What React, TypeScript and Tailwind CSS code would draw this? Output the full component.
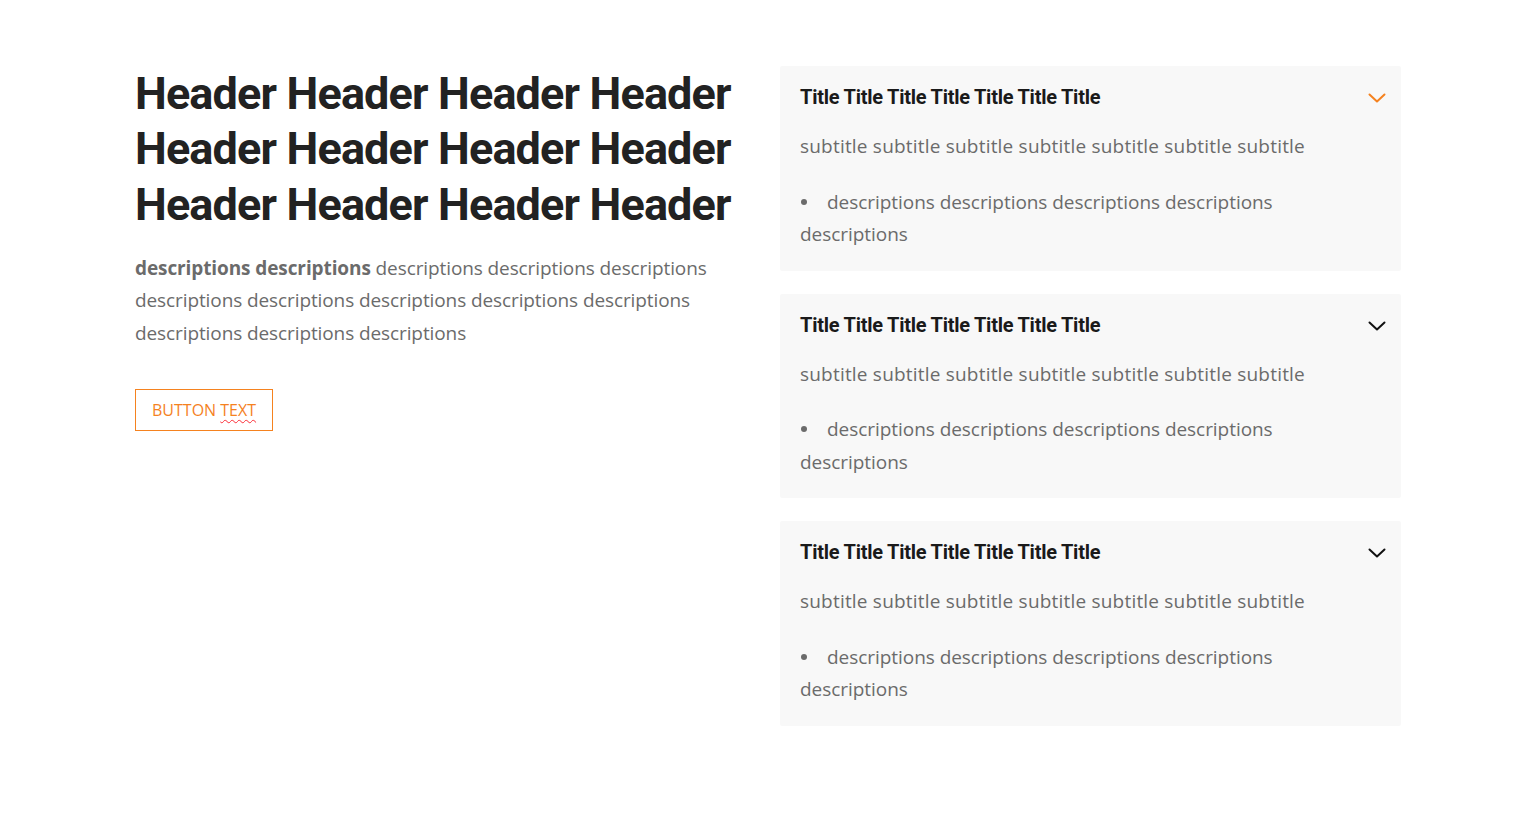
import React from 'react';

const items = [
  { title: 'Title Title Title Title Title Title Title', open: true },
  { title: 'Title Title Title Title Title Title Title', open: false },
  { title: 'Title Title Title Title Title Title Title', open: false },
];

const Chevron = ({ active }: { active: boolean }) => (
  <svg
    width="18"
    height="10"
    viewBox="0 0 18 10"
    fill="none"
    stroke="currentColor"
    strokeWidth={2}
    strokeLinecap="round"
    strokeLinejoin="round"
    className={active ? 'text-[#f5821f]' : 'text-[#111111]'}
  >
    <path d="M1.5 1.5 9 8.5l7.5-7" />
  </svg>
);

const App: React.FC = () => {
  return (
    <div className="min-h-[838px] w-full bg-white">
      <div className="ml-[135px] flex w-[1266px] gap-[45px] pt-[66px]">
        {/* left column */}
        <div className="w-[600px] shrink-0">
          <h1 className="font-['Roboto',sans-serif] text-[45px] font-bold leading-[55.3px] tracking-[-0.85px] text-[#222222]">
            Header Header Header Header Header Header Header Header Header Header Header Header
          </h1>
          <p className="mt-[20px] font-['Open_Sans',sans-serif] text-[19px] leading-[32.5px] tracking-[-0.1px] text-[#6b6b6b]">
            <span className="font-bold">descriptions descriptions</span> descriptions descriptions descriptions
            descriptions descriptions descriptions descriptions descriptions descriptions descriptions descriptions
          </p>
          <button className="mt-[40px] h-[42px] border border-[#f5821f] px-[16px] font-['Open_Sans',sans-serif] text-[16px] text-[#f5821f]">
            BUTTON{' '}
            <span className="underline decoration-red-500 decoration-wavy decoration-1 underline-offset-[3px]">TEXT</span>
          </button>
        </div>

        {/* right column: accordion */}
        <div className="flex flex-1 flex-col gap-[23px]">
          {items.map((item, i) => (
            <div key={i} className="rounded-[2px] bg-[#f8f8f8] px-[20px] pb-[20px] pt-[20px]">
              <div className="flex items-center justify-between">
                <h3 className="font-['Roboto',sans-serif] text-[20px] font-bold leading-[22px] tracking-[-0.25px] text-[#1a1a1a]">
                  {item.title}
                </h3>
                <div className="-mr-[5px] mt-[2px]">
                  <Chevron active={item.open} />
                </div>
              </div>
              <div className="pr-[40px] font-['Open_Sans',sans-serif] text-[19px] leading-[32.5px] text-[#6b6b6b]">
                <p className="mt-[22px] tracking-[0.2px]">subtitle subtitle subtitle subtitle subtitle subtitle subtitle</p>
                <ul className="mt-[23px] tracking-[-0.05px]">
                  <li>
                    <span className="mb-[3px] ml-[1px] mr-[20px] inline-block h-[6px] w-[6px] rounded-full bg-[#6b6b6b] align-middle" />
                    descriptions descriptions descriptions descriptions descriptions
                  </li>
                </ul>
              </div>
            </div>
          ))}
        </div>
      </div>
    </div>
  );
};

export default App;
